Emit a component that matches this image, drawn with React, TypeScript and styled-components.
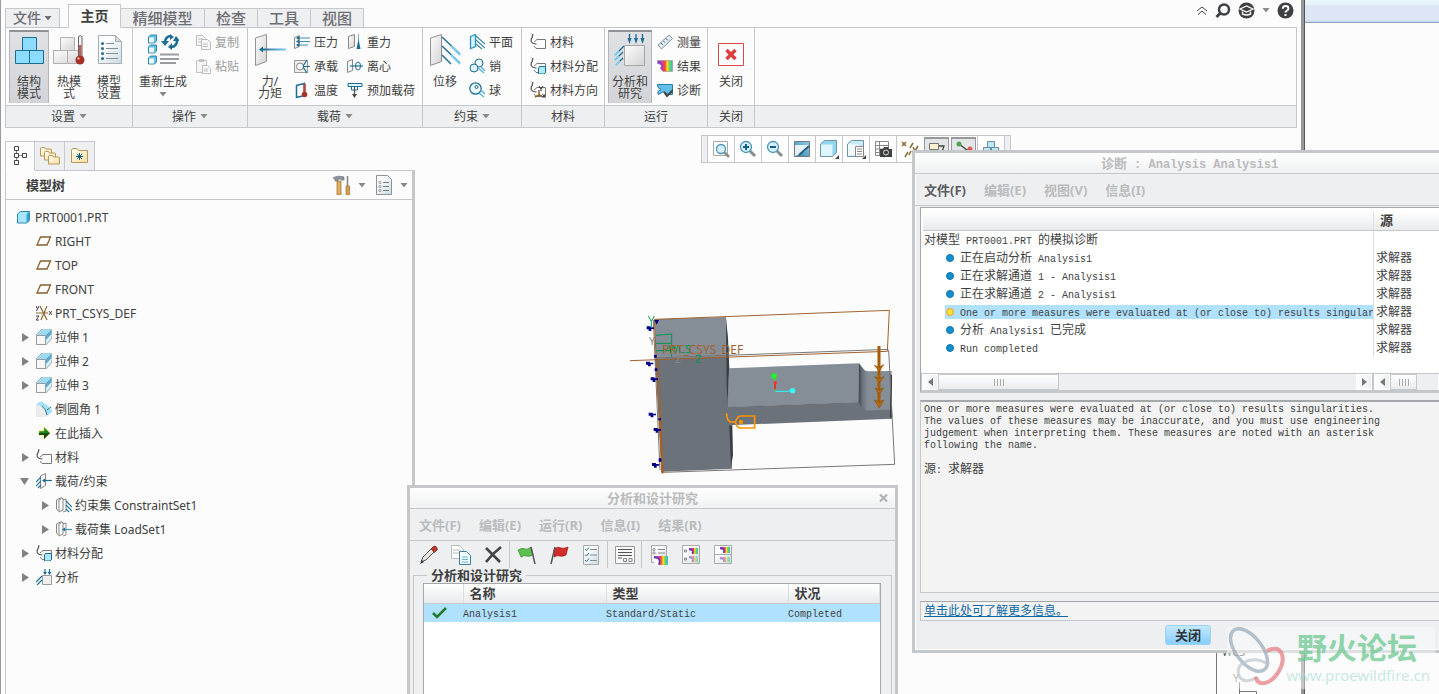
import React from 'react';
import styled, { createGlobalStyle, css } from 'styled-components';

const LINE = '#c5c8cb';
const PANEL = '#edeff1';
const PAGE = '#fcfcfc';
const TEXT = '#3f3f3f';
const MUTED = '#b9bbbd';
const SELECT = '#b0e2ff';

const GlobalStyle = createGlobalStyle`
  * { box-sizing: border-box; }
  body {
    margin: 0;
    background: ${PAGE};
    color: ${TEXT};
    font-family: "Noto Sans", "Noto Sans CJK SC", sans-serif;
    font-size: 12px;
  }
  button {
    margin: 0;
    padding: 0;
    border: 0;
    background: none;
    color: inherit;
    font: inherit;
    cursor: pointer;
  }
  svg { display: block; flex: none; }
`;

/* ---------- frame ---------- */

const Desktop = styled.div`
  position: relative;
  display: flex;
  height: 100vh;
  overflow: hidden;
`;

const MainWindow = styled.div`
  flex: 1;
  min-width: 0;
  display: flex;
  flex-direction: column;
  padding: 0 4px;
  border-left: 1px solid #999;
  border-right: 3px solid #979797;
`;

const BackWindow = styled.div`
  width: 135px;
  border-left: 1px solid #555;
`;

const BackTitle = styled.div`
  height: 23px;
  background: linear-gradient(#e9f6fb 0, #e4f0fa 5px, #dce6f5 6px, #dce6f5 20px, #c9dcf0 21px);
  border-bottom: 1px solid #8fa4c4;
`;

const Defs = styled.svg`
  position: absolute;
`;

/* ---------- header ---------- */

const Header = styled.header`
  display: flex;
  align-items: flex-end;
  height: 28px;
  margin-bottom: -1px;
`;

const tabBase = css`
  display: flex;
  align-items: center;
  justify-content: center;
  gap: 3px;
  height: 20px;
  background: ${PANEL};
  border: 1px solid ${LINE};
  color: #6d6e73;
  font-weight: 500;
  line-height: 16px;
`;

const FileTab = styled.button`
  ${tabBase}
  width: 55px;
  margin-right: 8px;
  font-size: 14px;
`;

const Tab = styled.button<{ $active?: boolean; $w: number }>`
  ${tabBase}
  width: ${(p) => p.$w}px;
  font-size: 15px;
  border-left-width: 0;
  ${(p) =>
    p.$active &&
    css`
      position: relative;
      z-index: 1;
      height: 24px;
      background: ${PAGE};
      border-left-width: 1px;
      border-bottom-color: ${PAGE};
      color: ${TEXT};
      font-weight: 700;
      font-size: 14px;
    `}
`;

const HeaderTools = styled.div`
  display: flex;
  align-items: center;
  gap: 7px;
  align-self: flex-start;
  height: 21px;
  margin-left: auto;
  margin-right: 3px;
`;

/* ---------- ribbon ---------- */

const Ribbon = styled.div`
  display: flex;
  border: 1px solid ${LINE};
`;

const GroupBox = styled.section<{ $w?: number }>`
  display: flex;
  flex-direction: column;
  ${(p) => (p.$w ? `width: ${p.$w}px; border-right: 1px solid ${LINE};` : 'flex: 1;')}
`;

const GroupBody = styled.div`
  display: flex;
  height: 77px;
  padding: 2px 0 2px 3px;
`;

const GroupLabel = styled.div`
  display: flex;
  align-items: center;
  justify-content: center;
  gap: 4px;
  height: 22px;
  background: ${PANEL};
  border-top: 1px solid ${LINE};
  line-height: 18px;
`;

const BigButton = styled.button<{ $w: number; $on?: boolean }>`
  display: flex;
  flex-direction: column;
  align-items: center;
  flex: none;
  width: ${(p) => p.$w}px;
  padding-top: 4px;
  line-height: 12px;
  ${(p) =>
    p.$on &&
    css`
      padding-top: 2px;
      background: linear-gradient(#dfe1e4, #d2d4d7);
      border: 1px solid #b3b5b8;
      border-top: 2px solid #8f9194;
      border-bottom: 0;
    `}
`;

const BigText = styled.span`
  min-height: 24px;
  margin-top: 10px;
  white-space: pre-line;
`;

const CaretUnder = styled.span`
  margin-top: -8px;
`;

const SmallColumn = styled.div`
  display: flex;
  flex-direction: column;
  min-width: 48px;
  margin-left: 5px;
`;

const SmallButton = styled.button`
  display: flex;
  align-items: center;
  gap: 4px;
  height: 24px;
  white-space: nowrap;
  &:disabled { color: #9b9b9b; }
`;

/* ---------- body ---------- */

const Body = styled.div`
  flex: 1;
  display: flex;
  min-height: 0;
`;

const Navigator = styled.aside`
  display: flex;
  flex-direction: column;
  width: 410px;
  padding-top: 13px;
`;

const NavTabs = styled.div`
  display: flex;
  height: 30px;
  margin-bottom: -1px;
`;

const NavTab = styled.button<{ $active?: boolean }>`
  display: flex;
  align-items: center;
  justify-content: center;
  width: 30px;
  border: 1px solid ${LINE};
  border-left-width: ${(p) => (p.$active ? 1 : 0)}px;
  background: ${(p) => (p.$active ? PAGE : PANEL)};
  border-bottom-color: ${(p) => (p.$active ? PAGE : LINE)};
  position: relative;
`;

const NavPanel = styled.div`
  flex: 1;
  border: 1px solid ${LINE};
  border-right-width: 3px;
  border-bottom: 0;
`;

const NavHeader = styled.div`
  display: flex;
  align-items: center;
  gap: 8px;
  height: 29px;
  padding: 0 4px 0 20px;
  border-bottom: 1px solid ${LINE};
`;

const NavTitle = styled.h2`
  flex: 1;
  margin: 0;
  font-size: 13px;
  font-weight: 700;
  line-height: 16px;
`;

const Tree = styled.ul`
  margin: 0;
  padding: 5px 0 0;
  list-style: none;
`;

const TreeRow = styled.li<{ $level: number }>`
  display: flex;
  align-items: center;
  gap: 3px;
  height: 24px;
  padding-left: ${(p) => 10 + (p.$level - 1) * 20}px;
  white-space: pre;
`;

const Expander = styled.span`
  display: flex;
  justify-content: center;
  width: 17px;
`;

const Canvas = styled.main`
  position: relative;
  flex: 1;
  display: flex;
  justify-content: center;
  align-items: flex-start;
  padding-top: 7px;
`;

const ViewToolbar = styled.div`
  display: flex;
  height: 28px;
  padding: 0 5px;
  background: ${PANEL};
  border: 1px solid ${LINE};
`;

const ViewButton = styled.button<{ $on?: boolean }>`
  display: flex;
  align-items: center;
  justify-content: center;
  width: 27px;
  background: ${(p) => (p.$on ? '#e3e5e7' : '#fff')};
  border-left: 1px solid ${LINE};
  ${(p) => p.$on && 'box-shadow: inset 0 2px 0 #97999c, inset 1px 0 0 #97999c, inset -1px 0 0 #97999c; border: 1px solid #fff;'}
  &:last-child { border-right: 1px solid ${LINE}; width: 28px; }
`;

const Scene = styled.svg`
  position: absolute;
  left: 205px;
  top: 172px;
`;

const CornerSketch = styled.svg`
  position: absolute;
  right: 134px;
  bottom: 0;
`;

/* ---------- dialogs ---------- */

const Dialog = styled.section<{ $kind: 'study' | 'diagnostics' }>`
  position: absolute;
  display: flex;
  flex-direction: column;
  background: ${PANEL};
  border: 3px solid ${LINE};
  ${(p) =>
    p.$kind === 'study'
      ? 'left: 407px; top: 485px; width: 491px; bottom: -40px;'
      : 'left: 912px; top: 150px; right: -28px; height: 503px; box-shadow: inset 1px -1px 0 #fff;'}
`;

const DialogTitle = styled.header`
  position: relative;
  display: flex;
  align-items: center;
  justify-content: center;
  height: 21px;
  flex: none;
  background: linear-gradient(#fefefe, #f0f1f2);
  border-bottom: 1px solid ${LINE};
  color: ${MUTED};
  font-size: 13px;
  font-weight: 700;
  line-height: 18px;
  white-space: pre;
`;

const CloseCross = styled.button`
  position: absolute;
  right: 7px;
  top: 5px;
`;

const MenuBar = styled.nav`
  display: flex;
  align-items: center;
  gap: 18px;
  flex: none;
  height: 32px;
  padding-left: 9px;
  border-bottom: 1px solid ${LINE};
`;

const MenuItem = styled.button`
  color: #5c5d61;
  font-size: 13px;
  font-weight: 700;
  line-height: 18px;
  &:disabled { color: ${MUTED}; }
`;

const Latin = styled.span<{ $large?: boolean }>`
  font-family: "Liberation Mono", monospace;
  font-size: ${(p) => (p.$large ? 12 : 10)}px;
  line-height: 1;
`;

const StudyTools = styled.div`
  display: flex;
  flex: none;
  height: 27px;
  padding-left: 3px;
`;

const ToolSet = styled.div`
  display: flex;
  padding-top: 1px;
  & + & {
    padding-left: 1px;
    border-left: 1px solid ${LINE};
  }
`;

const ToolButton = styled.button`
  display: flex;
  align-items: center;
  justify-content: center;
  width: 32px;
  height: 26px;
`;

const Fieldset = styled.fieldset`
  flex: 1;
  margin: 0 3px;
  padding: 1px 10px 0 9px;
  border: 1px solid ${LINE};
  display: flex;
  flex-direction: column;
  min-width: 0;
`;

const Legend = styled.legend`
  margin-left: 4px;
  padding: 0 4px;
  font-size: 13px;
  font-weight: 700;
  line-height: 14px;
`;

const Sheet = styled.div`
  flex: 1;
  min-height: 0;
  background: #fff;
  border: 1px solid #a5a8ab;
  overflow: hidden;
`;

const Table = styled.table`
  width: 100%;
  border-collapse: collapse;
  table-layout: fixed;
  white-space: pre;
`;

const HeadCell = styled.th<{ $w?: number }>`
  height: 19px;
  padding: 0 0 0 6px;
  ${(p) => p.$w && `width: ${p.$w}px;`}
  background: linear-gradient(#fff, #e8eaec);
  border-bottom: 1px solid ${LINE};
  border-right: 1px solid #dcdee0;
  font-size: 13px;
  font-weight: 700;
  line-height: 18px;
  text-align: left;
`;

const Cell = styled.td<{ $ruled?: boolean }>`
  height: 18px;
  padding: 0;
  line-height: 18px;
  overflow: hidden;
  ${(p) => p.$ruled && 'border-left: 1px solid #dcdee0; padding-left: 2px;'}
`;

const StudyRow = styled.tr`
  background: ${SELECT};
`;

const DiagBody = styled.div`
  flex: 1;
  display: flex;
  flex-direction: column;
  min-height: 0;
  padding: 1px 8px 3px 5px;
`;

const DiagSheet = styled.div`
  display: flex;
  flex-direction: column;
  height: 186px;
  background: #fff;
  border: 1px solid #a5a8ab;
  border-bottom: 2px solid ${LINE};
`;

const DiagRows = styled.div`
  flex: 1;
  padding: 3px 1px 0 2px;
`;

const Message = styled.div<{ $indent?: boolean; $on?: boolean }>`
  display: flex;
  align-items: center;
  gap: 6px;
  height: 14px;
  line-height: 18px;
  margin: 2px 0;
  margin-left: ${(p) => (p.$indent ? 22 : 0)}px;
  padding-left: 1px;
  background: ${(p) => (p.$on ? SELECT : 'none')};
`;

const Dot = styled.i<{ $warn?: boolean }>`
  flex: none;
  width: 8px;
  height: 8px;
  border-radius: 50%;
  background: ${(p) => (p.$warn ? '#ffe53a' : '#118fd0')};
  border: 1px solid ${(p) => (p.$warn ? '#f29a1c' : '#0a72a8')};
`;

const Scrollers = styled.div`
  display: flex;
  height: 18px;
`;

const ScrollBar = styled.div<{ $w?: number }>`
  display: flex;
  ${(p) => (p.$w ? `width: ${p.$w}px; flex: none;` : 'flex: 1;')}
  background: ${PANEL};
  border: 1px solid ${LINE};
`;

const ScrollArrow = styled.button`
  display: flex;
  align-items: center;
  justify-content: center;
  width: 16px;
  background: linear-gradient(90deg, #fff, #eceef0);
  border: 1px solid #fff;
`;

const ScrollThumb = styled.div<{ $w: number }>`
  display: flex;
  align-items: center;
  justify-content: center;
  width: ${(p) => p.$w}px;
  margin-right: auto;
  background: linear-gradient(#fff, #e9ebed);
  border: 1px solid ${LINE};
`;

const DetailBox = styled.div`
  flex: 1;
  margin: 7px 0 8px;
  padding: 2px 3px;
  background: #f3f3f3;
  border: 1px solid ${LINE};
  border-top: 2px solid #a5a8ab;
`;

const DetailText = styled.p`
  margin: 0 0 8px;
  font-family: "Liberation Mono", monospace;
  font-size: 10px;
  line-height: 12px;
  white-space: pre;
`;

const DetailSource = styled.p`
  margin: 0;
  line-height: 18px;
`;

const LinkBox = styled.div`
  display: flex;
  align-items: center;
  flex: none;
  height: 20px;
  padding-left: 3px;
  background: #f3f3f3;
  border: 1px solid ${LINE};
  border-top-color: #a5a8ab;
`;

const MoreLink = styled.a`
  color: #1069a8;
  line-height: 16px;
`;

const Actions = styled.footer`
  display: flex;
  justify-content: center;
  flex: none;
  padding: 4px 0 2px;
`;

const PrimaryButton = styled.button`
  width: 46px;
  height: 20px;
  background: linear-gradient(#c4e8ff, #86cdfa);
  border: 1px solid #9bd3f5;
  border-radius: 3px;
  color: #2f3437;
  font-size: 13px;
  font-weight: 700;
  line-height: 18px;
`;

/* ---------- watermark ---------- */

const Watermark = styled.div`
  position: absolute;
  right: 4px;
  bottom: 5px;
  display: flex;
  width: 208px;
  height: 62px;
  background: rgba(252, 252, 252, 0.45);
`;

const MarkText = styled.div`
  display: flex;
  flex-direction: column;
  align-items: flex-end;
  flex: 1;
  margin-left: -10px;
  white-space: nowrap;
`;

const MarkName = styled.strong`
  margin-right: 18px;
  color: rgba(110, 200, 145, 0.75);
  font-family: "Noto Sans CJK SC", sans-serif;
  font-size: 30px;
  line-height: 38px;
`;

const MarkUrl = styled.span`
  margin-right: 5px;
  color: rgba(170, 220, 215, 0.65);
  font-size: 15px;
  line-height: 20px;
`;

/* ---------- icons ---------- */

const BLUE = '#1b6d94';

function Icon({ size = 16, w, h, children }: { size?: number; w?: number; h?: number; children: React.ReactNode }) {
  const width = w ?? size;
  const height = h ?? size;
  return (
    <svg width={width} height={height} viewBox={`0 0 ${width} ${height}`} fill="none" aria-hidden="true">
      {children}
    </svg>
  );
}

const Caret = ({ color = '#86888b' }: { color?: string }) => (
  <Icon w={8} h={5}><path d="M.5 0h7L4 4.500z" fill={color} /></Icon>
);

const Blocks = ({ gray }: { gray?: boolean }) => {
  const p = gray ? { fill: 'url(#plate)', stroke: '#b0b0b0' } : { fill: '#8bdcff', stroke: BLUE };
  return (
    <g {...p}>
      <path d="M9.500 3.500h14v13h-14z" />
      <path d="M2.500 16.500h14v13h-14zM16.500 16.500h14v13h-14z" />
    </g>
  );
};

const bigIcons: Record<string, React.ReactNode> = {
  structure: <Icon size={32}><Blocks /></Icon>,
  thermal: (
    <Icon size={32}>
      <g transform="translate(-2 0)"><Blocks gray /></g>
      <path d="M25.500 3a1.800 1.800 0 0 1 3.500 0v20h-3.500z" fill="#f4f4f4" stroke="#666" />
      <path d="M26 11h2.500v14H26z" fill="#bb6058" />
      <circle cx="27" cy="26" r="4.500" fill="#a52f26" />
      <circle cx="25.500" cy="24.500" r="1.200" fill="#e9aaa4" />
    </Icon>
  ),
  settings: (
    <Icon size={32}>
      <path d="M5.500 1.500h17l6 6v22h-23z" fill="url(#doc)" stroke="#a9adb1" />
      <path d="M22.500 1.500v6h6z" fill="#d5dadd" stroke="#a9adb1" />
      <path d="M13 9.500h8M13 14.500h12M13 19.500h12M13 24.500h12" stroke="#8c8f92" />
      <g fill={BLUE}>
        <circle cx="9.500" cy="9.500" r="1.500" /><circle cx="9.500" cy="14.500" r="1.500" />
        <circle cx="9.500" cy="19.500" r="1.500" /><circle cx="9.500" cy="24.500" r="1.500" />
      </g>
    </Icon>
  ),
  regenerate: (
    <Icon size={32}>
      {[1, 11, 22].map((y) => (
        <g key={y}>
          <path d={`M1.500 ${y + 2}l2-2h6v6l-2 2h-6z`} fill="#5fc4e8" stroke={BLUE} strokeWidth=".8" />
          <path d={`M2 ${y + 2.500}h5v5H2z`} fill="#e8f8ff" />
        </g>
      ))}
      <path d="M13 20.500h19M13 25h19M13 29h16" stroke="#9a9c9e" strokeWidth="1.800" />
      <path d="M18 8a6 6 0 0 1 6-6M30 6a6 6 0 0 1-6 7" stroke={BLUE} strokeWidth="2.500" />
      <path d="M14 7h8l-4 5zM26 7h7l-4-5zM23 0l4 3-4 3zM25 9l-4 4 4 3z" fill={BLUE} />
    </Icon>
  ),
  force: (
    <Icon size={32}>
      <path d="M1.500 4l11-3.500v27l-11 4z" fill="url(#plate)" stroke="#8f9194" />
      <path d="M7 15.500h25" stroke="url(#fade)" strokeWidth="2" />
      <path d="M5 15.500l4-3v6z" fill={BLUE} />
    </Icon>
  ),
  displacement: (
    <Icon size={32}>
      <path d="M1.500 4l11-3.500v27l-11 4z" fill="url(#plate)" stroke="#8f9194" />
      <path d="M13 3l18 17M13 12l18 17M13 21l9 9" stroke="#276f93" strokeWidth="1.500" />
      <path d="M22 12l9 9M22 21l9 9" stroke="#7dcff2" strokeWidth="2" />
    </Icon>
  ),
  analysis: (
    <Icon size={32}>
      <path d="M10.500 11.500h20v20h-20z" fill="url(#plate)" stroke="#a6a6a6" />
      <path d="M15.500 0v7M22 0v7M28.500 0v7M10 12l-9 9M9 18l-8 8M9 24l-7 7" stroke={BLUE} strokeWidth="1.300" />
      <path d="M13.500 4h4l-2 6zM20 4h4l-2 6zM26.500 4h4l-2 6z" fill={BLUE} />
      <path d="M5 17l-4 4M5 22l-4 4M6 27l-4 4" stroke="#7dcff2" strokeWidth="2" />
    </Icon>
  ),
  close: (
    <Icon size={32}>
      <path d="M3.500 9.500h25v22h-25z" fill="#fff" stroke="#d8474a" />
      <path d="M11.500 16l9 9M20.500 16l-9 9" stroke="#dd3f41" strokeWidth="3.500" />
    </Icon>
  ),
};

const Tag = () => (
  <>
    <path d="M2.500 0c1.500 3-3 5-1 8 1 1.500 3 2 5 2" stroke="#555" strokeWidth="1.200" />
    <path d="M4 8l3-2.500h8.500v9H6L4 12" stroke="#777" />
  </>
);

const icons: Record<string, React.ReactNode> = {
  copy: <Icon><path d="M1.500 1.500h6l3 3v7h-9z" fill="#f8f8f8" stroke="#bbb" /><path d="M3 5h5M3 8h3" stroke="#bbb" /><path d="M6.500 5.500h6l3 3v7h-9z" fill="#f8f8f8" stroke="#bbb" /><path d="M8 10h5M8 12.500h5" stroke="#bbb" /></Icon>,
  paste: <Icon><path d="M1.500 2.500h10v12h-10z" stroke="#c2c2c2" fill="#f5f5f5" /><path d="M4 1h5v3H4z" fill="#c2c2c2" /><path d="M7.500 7.500h5l3 3v5h-8z" fill="#fff" stroke="#bbb" /><path d="M9 11h4M9 13h4" stroke="#bbb" /></Icon>,
  pressure: <Icon><path d="M.5 3.500l5-2v11l-5 2z" fill="#f5f5f5" stroke="#888" /><path d="M3 4h13M3 7.500h13M3 11h11" stroke="#3b8db2" /><path d="M2 4l3-2v4zM2 7.500l3-2v4zM2 11l3-2v4z" fill={BLUE} /></Icon>,
  bearing: <Icon><path d="M.5 2.500h13v12H.500z" fill="#eee" stroke="#999" /><circle cx="6" cy="8.500" r="3.500" fill="#fff" stroke="#888" /><path d="M9 8.500h7M9 8l4-6M9 9l4 6" stroke={BLUE} strokeWidth="1.200" /></Icon>,
  temperature: <Icon><path d="M2.500 3.500l8-2v12l-8 2z" fill="#fff" stroke={BLUE} strokeWidth="1.500" /><path d="M10.500 2v9" stroke="#b3483f" strokeWidth="2.500" /><circle cx="10.500" cy="12.500" r="2.800" fill="#a5352b" /></Icon>,
  gravity: <Icon><path d="M1.500 2.500l6-2v12l-6 2z" fill="url(#plate)" stroke="#888" /><path d="M11.500 0v11" stroke="#7bb6d0" /><path d="M9.500 15l2-10 2 10z" fill={BLUE} /></Icon>,
  centrifugal: <Icon><path d="M.5 3.500l5-2v11l-5 2z" fill="#f5f5f5" stroke="#888" /><path d="M3 8h13" stroke={BLUE} strokeWidth="1.200" /><ellipse cx="11" cy="8" rx="2.500" ry="4" stroke={BLUE} /></Icon>,
  preload: <Icon><path d="M1 1.500h14v3H1z" fill="#dff4fc" stroke={BLUE} /><path d="M4.500 5v3h6V5" stroke={BLUE} /><path d="M7.500 5v8" stroke="#555" strokeWidth="1.300" /><path d="M5 12h5l-2.500 4z" fill="#444" /></Icon>,
  plane: <Icon><path d="M1.500 2.500l5-2v12l-5 2z" fill="#d9f3fd" stroke="#2c93bd" strokeWidth="1.300" /><path d="M7 2l9 8M7 6l9 8M7 10l6 5" stroke="#3c8db0" strokeWidth="1.200" /></Icon>,
  pin: <Icon><circle cx="10" cy="5" r="4" fill="#eef6f9" stroke={BLUE} /><circle cx="5" cy="10" r="4" fill="#dff0f7" stroke={BLUE} /><path d="M9 10l6 5M12 9l4 4" stroke="#5ab4dc" strokeWidth="1.500" /></Icon>,
  ball: <Icon><circle cx="6.500" cy="6.500" r="5.700" fill="#eef6f9" stroke={BLUE} strokeWidth="1.200" /><circle cx="7.500" cy="5" r="1.500" stroke={BLUE} /><path d="M10 11l5 4M12 8l4 4" stroke="#5ab4dc" strokeWidth="1.500" /></Icon>,
  material: <Icon><Tag /></Icon>,
  assign: <Icon><Tag /><path d="M8.500 10l1-1.500h6v6L14 16H8.500z" fill="#aee9fb" stroke={BLUE} /></Icon>,
  orient: <Icon><Tag /><path d="M9 4l2 3 2-3M11 7v2M12.500 12l3 4M15.500 12l-3 4" stroke="#333" /><path d="M9 8v5l-4 2M9 13l3 1" stroke="#8a6526" strokeWidth="1.500" /></Icon>,
  measure: <Icon><path d="M1 11L12 1l3.500 3.500L4.500 15z" fill="#e4ebef" stroke="#7f8f99" /><path d="M4 9l2 2M6.500 7l1.500 1.500M9 4.500l2 2" stroke={BLUE} /></Icon>,
  result: <Icon><path d="M.5 2.500h15v11H.500z" fill="url(#rainbow)" stroke="#a88" strokeWidth=".6" /><path d="M0 6c5-1 5 3 3 4l3 4H0z" fill="#fff" /><path d="M2 5.500c4 0 4 4 2 5" stroke="#a03cc8" strokeWidth="1.500" /></Icon>,
  diagnose: <Icon><path d="M.5 2.500h15v10H11l-4-3-6 3v-3l3-2-3-2z" fill="#62bfe8" stroke="#2d7ca1" /><path d="M7 10l3 4 6-6" stroke="#444" strokeWidth="2" /></Icon>,
  part: <Icon><path d="M1.500 5l3-2.500h9v9l-3 2.500h-9z" fill="#a8e6ff" stroke="#2d86a8" /><path d="M10.500 14V5l3-2.500v9z" fill="#3aa3cd" /></Icon>,
  datum: <Icon><path d="M4.500 4h10l-3.500 8h-10z" stroke="#80602c" strokeWidth="1.300" /></Icon>,
  csys: <Icon><path d="M0 8h12M4 1l7 14M11 1L5 15" stroke="#8c6a33" strokeWidth="1.200" /><path d="M0 1l1.500 3L3 1M1.500 4L.5 6M0 11h3l-3 4h3M13 6l3 4M16 6l-3 4" stroke="#444" /></Icon>,
  extrude: <Icon><path d="M0 6l6-6h10v9l-6 7z" fill="#dbf2fb" stroke="#7a97a3" strokeWidth=".8" /><path d="M1 6l5-5.500h9.500L10 6z" fill="#9edaf2" /><path d="M10 6l5.500-5.500V5L10 11z" fill="#5ba9c9" /><path d="M.5 6.500h9v9h-9z" fill="#f7f7f7" stroke="#999" /></Icon>,
  round: <Icon><path d="M0 4c6-1 11 3 11 12H0z" fill="#ececec" /><path d="M3 1c9-1 13 4 13 10l-5 4C11 8 6 4 0 4z" fill="#a6dff5" /><path d="M6 1c4 0 7 3 9 7" stroke="#e9faff" strokeWidth="2" /><path d="M6 5q4 3 5 9M11 9l4-3" stroke="#27789c" /></Icon>,
  insert: <Icon><path d="M3 6h5V2l6 6-6 6v-4H3z" fill="#178a11" stroke="#d7cf3f" strokeWidth=".7" /><path d="M3 8h11l-6 6v-4H3z" fill="#1c4c10" /></Icon>,
  loads: <Icon><path d="M4.500 3l5-2.500v12l-5 3z" fill="#f8f8f8" stroke="#888" /><path d="M7 7.500h9" stroke={BLUE} strokeWidth="1.200" /><path d="M6 7.500l3-2v4z" fill={BLUE} /><path d="M5 4L0 9M5 8l-5 5M5 12l-3 3" stroke="#27789c" strokeWidth="1.200" /></Icon>,
  constraintSet: <Icon><path d="M.5 3l5-2.500M.5 3v9l2 2M3 3l4-2v12l-4 2zM7 3l3-1v12l-3 1" stroke="#888" /><path d="M10 4l6 6M10 8l6 6M10 12l3 3" stroke="#27789c" strokeWidth="1.200" /></Icon>,
  loadSet: <Icon><path d="M.5 3l5-2.500M.5 3v9l2 2M3 3l4-2v12l-4 2zM7 3l3-1v12l-3 1" stroke="#888" /><path d="M8 8.500h8" stroke="#3f92b6" strokeWidth="1.200" /><path d="M6 8.500l3-2v4z" fill={BLUE} /></Icon>,
  analysis: <Icon><path d="M6.500 6.500h9v9h-9z" fill="#efefef" stroke="#999" /><path d="M9 0v4M13.500 0v4M6 7l-6 6M6 11l-5 5" stroke={BLUE} strokeWidth="1.200" /><path d="M7 3h4L9 6zM11.500 3h4l-2 3z" fill={BLUE} /></Icon>,
};

const Rainbow = ({ x, y, w, h, pale }: { x: number; y: number; w: number; h: number; pale?: boolean }) => (
  <g opacity={pale ? 0.5 : 1}>
    <rect x={x} y={y} width={w} height={h} fill="url(#rainbow)" />
    <path d={`M${x} ${y + 2}q${w / 2} 0 ${w / 3} ${h - 2}H${x}z`} fill="#fff" />
    <path d={`M${x} ${y + 1.500}q${w / 2 + 1} 0 ${w / 3} ${h - 2}`} stroke="#6a2fbf" strokeWidth="1.500" />
  </g>
);

const Lens = ({ sign }: { sign?: 'plus' | 'minus' }) => (
  <Icon size={18}>
    <path d="M10 10l6 6" stroke="#8b8d90" strokeWidth="3" />
    <circle cx="7" cy="7" r="5.500" fill="#d7f0fb" stroke="#4595b7" strokeWidth="1.300" />
    {sign && <path d={sign === 'plus' ? 'M4 7h6M7 4v6' : 'M4 7h6'} stroke="#12618a" strokeWidth="2" />}
  </Icon>
);

const viewTools: { name: string; on?: boolean; icon: React.ReactNode }[] = [
  { name: '重新调整', icon: <Icon size={18}><path d="M1.500 1.500h14v14h-14z" stroke="#a8a8a8" /><circle cx="9" cy="9" r="4.500" fill="#d7f0fb" stroke="#4595b7" strokeWidth="1.300" /><path d="M12 12l5 5" stroke="#8b8d90" strokeWidth="2.500" /></Icon> },
  { name: '放大', icon: <Lens sign="plus" /> },
  { name: '缩小', icon: <Lens sign="minus" /> },
  { name: '重画', icon: <Icon size={18}><path d="M1.500 1.500h15v15h-15z" fill="url(#sheet)" stroke="#777" /><path d="M2 5h14q-3 8-14 11z" fill="#fff" opacity=".85" /><path d="M6 15L16 6" stroke="#1d5f80" strokeWidth="1.800" /></Icon> },
  { name: '显示样式', icon: <Icon size={20}><path d="M1.500 5l4-3.500h12v12l-4 4h-12z" fill="#8fd6f0" stroke="#7193a3" /><path d="M2 5.500h11.500v11.500H2z" fill="#dff5fd" /><path d="M20 16v4h-4z" fill="#444" /></Icon> },
  { name: '已保存方向', icon: <Icon size={20}><path d="M1.500 5l4-3.500h12v12l-4 4h-12z" fill="#c7ebf8" stroke="#7193a3" /><path d="M2 5.500h11v11H2z" fill="#f1fbff" /><path d="M9.500 7.500h8v10h-8z" fill="#fff" stroke="#888" /><path d="M11 10h5M11 12.500h5M11 15h5" stroke="#888" /><path d="M20 16v4h-4z" fill="#444" /></Icon> },
  { name: '视图管理器', icon: <Icon size={18}><path d="M1.500 1.500h13v14h-13zM1 5.500h14M1 9h14M1 12.500h14M5.500 1v14" stroke="#888" /><path d="M6 9h3l1-2h4l1 2h3v8H6z" fill="#3d3f41" /><circle cx="12" cy="12.500" r="2.500" fill="#3d3f41" stroke="#ddd" /></Icon> },
  { name: '基准显示', icon: <Icon size={18}><path d="M1 2l4 4M5 2L1 6M4 17l3-5M9 8l3-5M12 7l2 4 3-5M8 15l2-4" stroke="#8a6a2c" strokeWidth="1.500" /></Icon> },
  { name: '注释显示', on: true, icon: <Icon size={18}><path d="M1.500 3.500h9v6h-9z" fill="#fff3cf" stroke="#777" /><path d="M11 6h5l-2 6M12 11l2 3 2-4" stroke="#444" strokeWidth="1.300" /></Icon> },
  { name: '旋转中心', on: true, icon: <Icon size={18}><path d="M4 4l8 6h4" stroke="#444" strokeWidth="1.300" /><circle cx="4" cy="4" r="2.500" fill="#4fa050" /><circle cx="15" cy="9" r="2.500" fill="#e25b5b" /></Icon> },
  { name: '模拟显示', icon: <Icon size={18}><path d="M5.500 1.500h7v6h-7zM1.500 7.500h7v7h-7zM9.500 7.500h7v7h-7z" fill="#bce9fa" stroke="#6a8b99" /></Icon> },
];

const studyTools: { name: string; icon: React.ReactNode }[][] = [
  [
    { name: '编辑研究', icon: <Icon size={20}><path d="M2 17l2-5L14 2l3 3L7 15z" fill="#e8e4df" stroke="#555" /><path d="M12 4l3-3q3 0 3.500 3.500L15.500 7.500z" fill="#b9392e" stroke="#7c2b23" strokeWidth=".8" /><path d="M1 19l2-4 2 2z" fill="#333" /></Icon> },
    { name: '复制研究', icon: <Icon size={20}><path d="M.5 .5h8l4 4v9H.500z" fill="#fff" stroke="#bbb" /><path d="M2 5h8M2 8h6" stroke="#bbb" /><path d="M8.500 6.500h7l4 4v9h-11z" fill="#f2fbff" stroke="#35809f" /><path d="M11 12h6M11 14.500h6M11 17h6" stroke="#6bb3cf" /></Icon> },
    { name: '删除研究', icon: <Icon size={20}><path d="M3 3l14 14M18 2Q9 9 3 17" stroke="#444" strokeWidth="2.600" /></Icon> },
  ],
  [
    { name: '开始运行', icon: <Icon size={20}><path d="M1 5q4-3 7-1 3 1 6-2l2 8q-4 2-6 1-3-1-6 1z" fill="#5cc04f" stroke="#3a8a33" strokeWidth=".7" /><path d="M14 2l4 17" stroke="#555" strokeWidth="1.500" /></Icon> },
    { name: '停止运行', icon: <Icon size={20}><path d="M5 4q4-3 7-1 3 1 7-1l-2 8q-4 2-6 1-3-1-6 1z" fill="#d42b2b" stroke="#931c1c" strokeWidth=".7" /><path d="M6 2L2 19" stroke="#555" strokeWidth="1.500" /></Icon> },
    { name: '设置', icon: <Icon size={20}><path d="M2.500 .500h15v19h-15z" fill="url(#doc)" stroke="#aaa" /><path d="M9 4.500h7M9 10h7M9 15.500h7" stroke="#888" /><path d="M4 4l1.500 1.500L8 2.500M4 9.500L5.500 11 8 8M4 15l1.500 1.500L8 13.500" stroke={BLUE} /></Icon> },
  ],
  [{ name: '显示状态', icon: <Icon size={20}><path d="M.5 1.500h19v17H.500z" fill="#f7f7f7" stroke="#9a9a9a" /><path d="M3 4.500h14M3 7.500h14M3 10.500h14M3 13h4" stroke="#555" /><path d="M8.500 13.500h3v3h-3zM14 13.500h3v3h-3z" stroke="#888" /></Icon> }],
  [
    { name: '结果', icon: <Icon size={20}><path d="M2.500 .500h15v17h-15z" fill="url(#doc)" stroke="#aaa" /><path d="M9 4.500h7M9 8h7" stroke="#888" /><path d="M4 3.500h2v2H4zM4 7h2v2H4z" stroke="#999" /><Rainbow x={5} y={11} w={14} h={9} /></Icon> },
    { name: '比较结果', icon: <Icon size={20}><path d="M1.500 .500h17v18h-17z" fill="url(#doc)" stroke="#aaa" /><path d="M3.500 5h2v2h-2zM3.500 13h2v2h-2z" stroke="#888" /><Rainbow x={8} y={3} w={9} h={6} /><Rainbow x={8} y={11} w={9} h={6} pale /></Icon> },
    { name: '动画结果', icon: <Icon size={20}><path d="M1.500 .500h17v18h-17zM1.500 9.500h17" fill="url(#doc)" stroke="#aaa" /><Rainbow x={7} y={2} w={10} h={6} /><Rainbow x={7} y={12} w={10} h={5} pale /></Icon> },
  ],
];

/* ---------- small composites ---------- */

function Mixed({ text, large }: { text: string; large?: boolean }) {
  return (
    <span>
      {text.split(/([\x20-\x7e]+)/).filter(Boolean).map((part, i) =>
        /^[\x20-\x7e]/.test(part) ? <Latin key={i} $large={large}>{part}</Latin> : part,
      )}
    </span>
  );
}

function Group({ label, w, menu, children }: { label: string; w: number; menu?: boolean; children: React.ReactNode }) {
  return (
    <GroupBox $w={w}>
      <GroupBody>{children}</GroupBody>
      <GroupLabel>{label}{menu && <Caret />}</GroupLabel>
    </GroupBox>
  );
}

function Big({ icon, text, w, on, menu }: { icon: string; text: string; w: number; on?: boolean; menu?: boolean }) {
  return (
    <BigButton $w={w} $on={on}>
      {bigIcons[icon]}
      <BigText>{text}</BigText>
      {menu && <CaretUnder><Caret /></CaretUnder>}
    </BigButton>
  );
}

function Smalls({ items, disabled }: { items: [string, string][]; disabled?: boolean }) {
  return (
    <SmallColumn>
      {items.map(([icon, text]) => (
        <SmallButton key={text} disabled={disabled}>{icons[icon]}{text}</SmallButton>
      ))}
    </SmallColumn>
  );
}

const tree: { icon: string; text: string; level: number; arrow?: 'closed' | 'open' }[] = [
  { icon: 'datum', text: 'RIGHT', level: 1 },
  { icon: 'datum', text: 'TOP', level: 1 },
  { icon: 'datum', text: 'FRONT', level: 1 },
  { icon: 'csys', text: 'PRT_CSYS_DEF', level: 1 },
  { icon: 'extrude', text: '拉伸 1', level: 1, arrow: 'closed' },
  { icon: 'extrude', text: '拉伸 2', level: 1, arrow: 'closed' },
  { icon: 'extrude', text: '拉伸 3', level: 1, arrow: 'closed' },
  { icon: 'round', text: '倒圆角 1', level: 1 },
  { icon: 'insert', text: '在此插入', level: 1 },
  { icon: 'material', text: '材料', level: 1, arrow: 'closed' },
  { icon: 'loads', text: '载荷/约束', level: 1, arrow: 'open' },
  { icon: 'constraintSet', text: '约束集 ConstraintSet1', level: 2, arrow: 'closed' },
  { icon: 'loadSet', text: '载荷集 LoadSet1', level: 2, arrow: 'closed' },
  { icon: 'assign', text: '材料分配', level: 1, arrow: 'closed' },
  { icon: 'analysis', text: '分析', level: 1, arrow: 'closed' },
];

const messages = [
  '正在启动分析 Analysis1',
  '正在求解通道 1 - Analysis1',
  '正在求解通道 2 - Analysis1',
  'One or more measures were evaluated at (or close to) results singularities.',
  '分析 Analysis1 已完成',
  'Run completed',
];

const detail = [
  'One or more measures were evaluated at (or close to) results singularities.',
  'The values of these measures may be inaccurate, and you must use engineering',
  'judgement when interpreting them. These measures are noted with an asterisk',
  'following the name.',
].join('\n');

function Menu({ items, active }: { items: string[]; active?: boolean }) {
  return (
    <MenuBar>
      {items.map((t, i) => <MenuItem key={t} disabled={!(active && i === 0)}>{t}</MenuItem>)}
    </MenuBar>
  );
}

const Grip = () => <Icon w={12} h={7}><path d="M1.500 0v7M4.500 0v7M7.500 0v7M10.500 0v7" stroke="#aaa" /></Icon>;

const ArrowIcon = ({ right }: { right?: boolean }) => (
  <Icon w={5} h={8}><path d={right ? 'M0 0l5 4-5 4z' : 'M5 0L0 4l5 4z'} fill="#777" /></Icon>
);

function Model() {
  return (
    <Scene width="300" height="185" viewBox="0 0 300 185" fill="none">
      <g transform="scale(.33333)">
        <path d="M104 58L318 51 327 176 107 186z" fill="#858d96" />
        <path d="M105 176L323 170 336 506 126 515z" fill="#6b727a" />
        <path d="M318 55l6 60 4 90-5 95 3 60-6-100z" fill="#3a3e43" />
        <path d="M327 205L717 190 737 214 815 213V330L740 332 718 307 323 322z" fill="#858d96" />
        <path d="M323 321L716 306 740 331 814 329V356L323 376z" fill="#6b727a" />
        <path d="M717 190q12 24 27 26v115q-20-2-28-25z" fill="url(#fillet)" />
        <path d="M811 225h5v130h-6z" fill="#3a3e43" />
        <path d="M328 376h9l2 90-6 34z" fill="#3a3e43" />
        <g stroke="#777" strokeWidth="3">
          <path d="M108 174L805 148M806 150L824 493 130 517M100 60l20 450" />
        </g>
        <g stroke="#a2622d" strokeWidth="3">
          <path d="M104 58L808 31 802 154 30 182M103 58l22 460M116 180l13 338" />
          <path d="M120 360l8 160" strokeWidth="6" />
        </g>
        <g fill="#000087">
          {[[80, 84], [78, 190], [92, 237], [86, 343], [101, 389], [96, 494]].map(([x, y]) => (
            <path key={y} d={`M${x} ${y - 5}h12v3h10v5h-8v6h-8v-5h-6z`} />
          ))}
          <path d="M103 60h14l-7 14zM102 165h8v8h-8zM104 205h8v8h-8zM115 355h8v6h-8zM116 475h8v10h-8z" />
        </g>
        <g stroke="#009455" strokeWidth="3">
          <path d="M85 48l9 16 9-16M94 64v20M108 106l47-4v68M108 130h48M108 152h45" />
        </g>
        <g stroke="#28e23c" strokeWidth="4">
          <path d="M464 272v-40" />
          <circle cx="462" cy="228" r="7" fill="#28ff28" />
        </g>
        <path d="M465 268v-24" stroke="#e22" strokeWidth="5" />
        <circle cx="466" cy="248" r="5" fill="#f33" />
        <path d="M466 274h38l8-3" stroke="#2ff" strokeWidth="3" />
        <circle cx="518" cy="272" r="8" fill="#3ff" />
        <g stroke="#ff9400" strokeWidth="5">
          <path d="M320 340q0 26 14 26h12l6-12q4-6 10-6h42v36h-42q-8 0-12-8l-4-10" />
          <circle cx="363" cy="366" r="4" fill="#ff9400" />
        </g>
        <path d="M777 138v170" stroke="#a85c00" strokeWidth="9" />
        <path d="M763 196l14 6 14-8-13 20zM764 230l14 6 14-6-14 18zM765 264l13 6 12-6-12 18zM763 300l15 6 13-6-13 24z" fill="#b96a08" stroke="#8c4d00" strokeWidth="2" />
      </g>
      <g fontSize="11">
        <text x="48" y="53" fill="#009455">WCS</text>
        <text x="75" y="63" fill="#009455">Z</text>
        <text x="29" y="45" fill="#888">Y</text>
        <text x="55" y="63" fill="#888">Z</text>
        <text x="42" y="54" fill="#a2622d" fontSize="12">PRT_CSYS_DEF</text>
      </g>
    </Scene>
  );
}

/* ---------- page ---------- */

export default function App() {
  return (
    <>
      <GlobalStyle />
      <Defs width="0" height="0" aria-hidden="true">
        <defs>
          <linearGradient id="plate" x1="0" y1="0" x2="1" y2="1"><stop stopColor="#fdfdfd" /><stop offset="1" stopColor="#d3d3d3" /></linearGradient>
          <linearGradient id="doc" x1="0" y1="0" x2="1" y2="1"><stop offset=".3" stopColor="#fdfdfd" /><stop offset="1" stopColor="#c6dbe5" /></linearGradient>
          <linearGradient id="sheet" x1="1" y1="0" x2="0" y2="1"><stop stopColor="#8fd3f0" /><stop offset="1" stopColor="#2e7fa6" /></linearGradient>
          <linearGradient id="folder" x1="0" y1="0" x2="1" y2="1"><stop stopColor="#fffdf4" /><stop offset="1" stopColor="#f9df9f" /></linearGradient>
          <linearGradient id="fade" gradientUnits="userSpaceOnUse" x1="6" y1="0" x2="32" y2="0"><stop stopColor="#1b5d80" /><stop offset="1" stopColor="#7fd0f5" /></linearGradient>
          <linearGradient id="fillet"><stop stopColor="#3f444a" /><stop offset=".4" stopColor="#6b727a" /><stop offset="1" stopColor="#858d96" /></linearGradient>
          <linearGradient id="rainbow"><stop stopColor="#4b49d8" /><stop offset=".3" stopColor="#d33bb0" /><stop offset=".5" stopColor="#f04a2d" /><stop offset=".65" stopColor="#ffd92e" /><stop offset=".82" stopColor="#5cd65a" /><stop offset="1" stopColor="#39b8f0" /></linearGradient>
        </defs>
      </Defs>

      <Desktop>
        <MainWindow>
          <Header>
            <FileTab>文件<Caret color="#6d6e73" /></FileTab>
            <Tab $active $w={53}>主页</Tab>
            <Tab $w={84}>精细模型</Tab>
            <Tab $w={53}>检查</Tab>
            <Tab $w={53}>工具</Tab>
            <Tab $w={53}>视图</Tab>
            <HeaderTools>
              <button aria-label="最小化功能区"><Icon w={12} h={9}><path d="M1 5l5-4 5 4M2 8.500L6 5l4 3.500" stroke="#444" /></Icon></button>
              <button aria-label="搜索"><Icon><circle cx="9" cy="6.500" r="5" stroke="#3e4043" strokeWidth="2.500" /><path d="M5 10.500L1.500 14" stroke="#3e4043" strokeWidth="3" /></Icon></button>
              <button aria-label="学习"><Icon size={17}><circle cx="8.500" cy="8.500" r="8" fill="#3e4043" /><path d="M2 7l6.500-3L15 7l-6.500 3z" stroke="#fff" strokeWidth="1.200" /><path d="M4.500 9.500V12q4 2 8 0V9.500" stroke="#fff" strokeWidth="1.400" /></Icon></button>
              <Caret />
              <button aria-label="帮助">
                <Icon size={17}><circle cx="8.500" cy="8.500" r="8" fill="#3e4043" /><path d="M5.800 6.800q0-2.800 2.800-2.800t2.800 2.400q0 1.400-1.600 2.200-1.300.7-1.300 2M8.500 12v2" stroke="#fff" strokeWidth="2" /></Icon>
              </button>
            </HeaderTools>
          </Header>

          <Ribbon>
            <Group label="设置" w={127} menu>
              <Big icon="structure" text={'结构\n模式'} w={40} on />
              <Big icon="thermal" text={'热模\n式'} w={40} />
              <Big icon="settings" text={'模型\n设置'} w={40} />
            </Group>
            <Group label="操作" w={115} menu>
              <Big icon="regenerate" text="重新生成" w={54} menu />
              <Smalls disabled items={[['copy', '复制'], ['paste', '粘贴']]} />
            </Group>
            <Group label="载荷" w={175} menu>
              <Big icon="force" text={'力/\n力矩'} w={38} />
              <Smalls items={[['pressure', '压力'], ['bearing', '承载'], ['temperature', '温度']]} />
              <Smalls items={[['gravity', '重力'], ['centrifugal', '离心'], ['preload', '预加载荷']]} />
            </Group>
            <Group label="约束" w={99} menu>
              <Big icon="displacement" text="位移" w={38} />
              <Smalls items={[['plane', '平面'], ['pin', '销'], ['ball', '球']]} />
            </Group>
            <Group label="材料" w={83}>
              <Smalls items={[['material', '材料'], ['assign', '材料分配'], ['orient', '材料方向']]} />
            </Group>
            <Group label="运行" w={103}>
              <Big icon="analysis" text={'分析和\n研究'} w={44} on />
              <Smalls items={[['measure', '测量'], ['result', '结果'], ['diagnose', '诊断']]} />
            </Group>
            <Group label="关闭" w={47}>
              <Big icon="close" text="关闭" w={40} />
            </Group>
            <GroupBox>
              <GroupBody />
              <GroupLabel />
            </GroupBox>
          </Ribbon>

          <Body>
            <Navigator>
              <NavTabs>
                <NavTab $active aria-label="模型树">
                  <Icon w={14} h={20}>
                    <path d="M1.500 .500h4v4h-4zM1.500 7.500h4v4h-4zM1.500 14.500h4v4h-4zM9.500 7.500h4v4h-4z" stroke="#444" />
                    <path d="M3.500 5v2M3.500 12v2M6 9.500h3" stroke="#888" />
                  </Icon>
                </NavTab>
                <NavTab aria-label="文件夹浏览器">
                  <Icon size={20}>
                    {[[0, 1], [4, 5], [8, 9]].map(([x, y]) => (
                      <path key={x} d={`M${x + 0.500} ${y + 1.500}q0-1 1-1h3l1 1.500h5q1 0 1 1v6h-11z`} fill="url(#folder)" stroke="#b9975a" />
                    ))}
                  </Icon>
                </NavTab>
                <NavTab aria-label="收藏夹">
                  <Icon size={18}>
                    <path d="M.5 3.500q0-2 1.500-2h4l1.500 2h9v12H.500z" fill="url(#folder)" stroke="#b9975a" />
                    <path d="M8.500 6v7M5 9.500h7M6 7l5 5M11 7l-5 5" stroke="#165b78" />
                  </Icon>
                </NavTab>
              </NavTabs>
              <NavPanel>
                <NavHeader>
                  <NavTitle>模型树</NavTitle>
                  <button aria-label="设置">
                    <Icon w={18} h={20}>
                      <path d="M1 3q4-3 11-1v3H9V4H6v2H3V4z" fill="#8f93a3" stroke="#61646f" strokeWidth=".6" />
                      <path d="M5 6h4v14H5z" fill="#e1ad62" stroke="#9a6d2f" strokeWidth=".7" />
                      <path d="M15.500 1v10" stroke="#888" strokeWidth="1.600" /><path d="M14 11h3.500v9H14z" fill="#dc9c55" stroke="#96632a" strokeWidth=".6" />
                    </Icon>
                  </button>
                  <Caret />
                  <button aria-label="显示">
                    <Icon w={18} h={20}>
                      <path d="M2.500 .500h11l4 4v15h-15z" fill="url(#doc)" stroke="#8f9194" />
                      <path d="M9 7.500h6M9 11.500h6M9 15.500h6" stroke="#777" />
                      <path d="M5 6.500h2v2H5zM5 10.500h2v2H5zM5 14.500h2v2H5z" stroke="#999" strokeWidth=".8" />
                    </Icon>
                  </button>
                  <Caret />
                </NavHeader>
                <Tree>
                  <TreeRow $level={1}>{icons.part}<span>PRT0001.PRT</span></TreeRow>
                  {tree.map((n) => (
                    <TreeRow key={n.text} $level={n.level}>
                      <Expander>
                        {n.arrow === 'closed' && <Icon w={8} h={9}><path d="M1 0l7 4.500L1 9z" fill="#808285" /></Icon>}
                        {n.arrow === 'open' && <Icon w={9} h={7}><path d="M0 0h9L4.500 7z" fill="#808285" /></Icon>}
                      </Expander>
                      {icons[n.icon]}
                      <span>{n.text}</span>
                    </TreeRow>
                  ))}
                </Tree>
              </NavPanel>
            </Navigator>

            <Canvas>
              <ViewToolbar>
                {viewTools.map((t) => <ViewButton key={t.name} $on={t.on} aria-label={t.name}>{t.icon}</ViewButton>)}
              </ViewToolbar>
              <Model />
            </Canvas>
          </Body>
        </MainWindow>

        <BackWindow><BackTitle /></BackWindow>

        <CornerSketch width="89" height="54" viewBox="0 0 89 54" fill="none">
          <path d="M.5 10v44" stroke="#777" />
          <text x="6" y="16" fontSize="11" fill="#555">WCS</text>
          <text x="17" y="42" fontSize="11" fill="#888">Y</text>
          <path d="M23.500 42v12M23.500 51.500h17V54" stroke="#777" />
        </CornerSketch>

        <Dialog $kind="study">
          <DialogTitle>
            分析和设计研究
            <CloseCross aria-label="关闭"><Icon w={9} h={10}><path d="M1 1.500l7 7M8 1.500l-7 7" stroke="#b0b2b4" strokeWidth="2.200" /></Icon></CloseCross>
          </DialogTitle>
          <Menu items={['文件(F)', '编辑(E)', '运行(R)', '信息(I)', '结果(R)']} />
          <StudyTools>
            {studyTools.map((set, i) => (
              <ToolSet key={i}>
                {set.map((t) => <ToolButton key={t.name} aria-label={t.name}>{t.icon}</ToolButton>)}
              </ToolSet>
            ))}
          </StudyTools>
          <Fieldset>
            <Legend>分析和设计研究</Legend>
            <Sheet>
              <Table>
                <thead>
                  <tr>
                    <HeadCell $w={39} aria-label="状态" />
                    <HeadCell $w={143}>名称</HeadCell>
                    <HeadCell $w={182}>类型</HeadCell>
                    <HeadCell>状况</HeadCell>
                  </tr>
                </thead>
                <tbody>
                  <StudyRow>
                    <Cell><Icon w={30} h={12}><path d="M9 6l4 4L22 1" stroke="#1f7a2c" strokeWidth="2.500" /></Icon></Cell>
                    <Cell><Latin>Analysis1</Latin></Cell>
                    <Cell><Latin>Standard/Static</Latin></Cell>
                    <Cell><Latin>Completed</Latin></Cell>
                  </StudyRow>
                </tbody>
              </Table>
            </Sheet>
          </Fieldset>
        </Dialog>

        <Dialog $kind="diagnostics">
          <DialogTitle><Mixed large text="诊断 : Analysis Analysis1" /></DialogTitle>
          <Menu active items={['文件(F)', '编辑(E)', '视图(V)', '信息(I)']} />
          <DiagBody>
            <DiagSheet>
              <DiagRows>
                <Table>
                  <thead>
                    <tr>
                      <HeadCell aria-label="消息" />
                      <HeadCell $w={80}>源</HeadCell>
                    </tr>
                  </thead>
                  <tbody>
                    <tr>
                      <Cell><Message><Mixed text="对模型 PRT0001.PRT 的模拟诊断" /></Message></Cell>
                      <Cell $ruled />
                    </tr>
                    {messages.map((m, i) => (
                      <tr key={m}>
                        <Cell><Message $indent $on={i === 3}><Dot $warn={i === 3} /><Mixed text={m} /></Message></Cell>
                        <Cell $ruled>求解器</Cell>
                      </tr>
                    ))}
                  </tbody>
                </Table>
              </DiagRows>
              <Scrollers>
                <ScrollBar>
                  <ScrollArrow aria-label="向左"><ArrowIcon /></ScrollArrow>
                  <ScrollThumb $w={121}><Grip /></ScrollThumb>
                  <ScrollArrow aria-label="向右"><ArrowIcon right /></ScrollArrow>
                </ScrollBar>
                <ScrollBar $w={82}>
                  <ScrollArrow aria-label="向左"><ArrowIcon /></ScrollArrow>
                  <ScrollThumb $w={27}><Grip /></ScrollThumb>
                  <ScrollArrow aria-label="向右"><ArrowIcon right /></ScrollArrow>
                </ScrollBar>
              </Scrollers>
            </DiagSheet>
            <DetailBox>
              <DetailText>{detail}</DetailText>
              <DetailSource><Mixed text="源: 求解器" /></DetailSource>
            </DetailBox>
            <LinkBox><MoreLink href="#more">单击此处可了解更多信息。</MoreLink></LinkBox>
            <Actions><PrimaryButton>关闭</PrimaryButton></Actions>
          </DiagBody>
        </Dialog>

        <Watermark>
          <Icon w={62} h={62}>
            <ellipse cx="22" cy="23" rx="25" ry="13" transform="rotate(52 22 23)" stroke="#8fa3b3" strokeWidth="3.500" opacity=".65" />
            <path d="M30 50C12 62 6 42 16 36s20-2 26 2" stroke="#bcc6cd" strokeWidth="3" opacity=".7" />
            <path d="M40 24c14-8 20 6 12 20S30 60 29 50" stroke="#e67f86" strokeWidth="4" opacity=".75" />
          </Icon>
          <MarkText>
            <MarkName>野火论坛</MarkName>
            <MarkUrl>www.proewildfire.cn</MarkUrl>
          </MarkText>
        </Watermark>
      </Desktop>
    </>
  );
}
